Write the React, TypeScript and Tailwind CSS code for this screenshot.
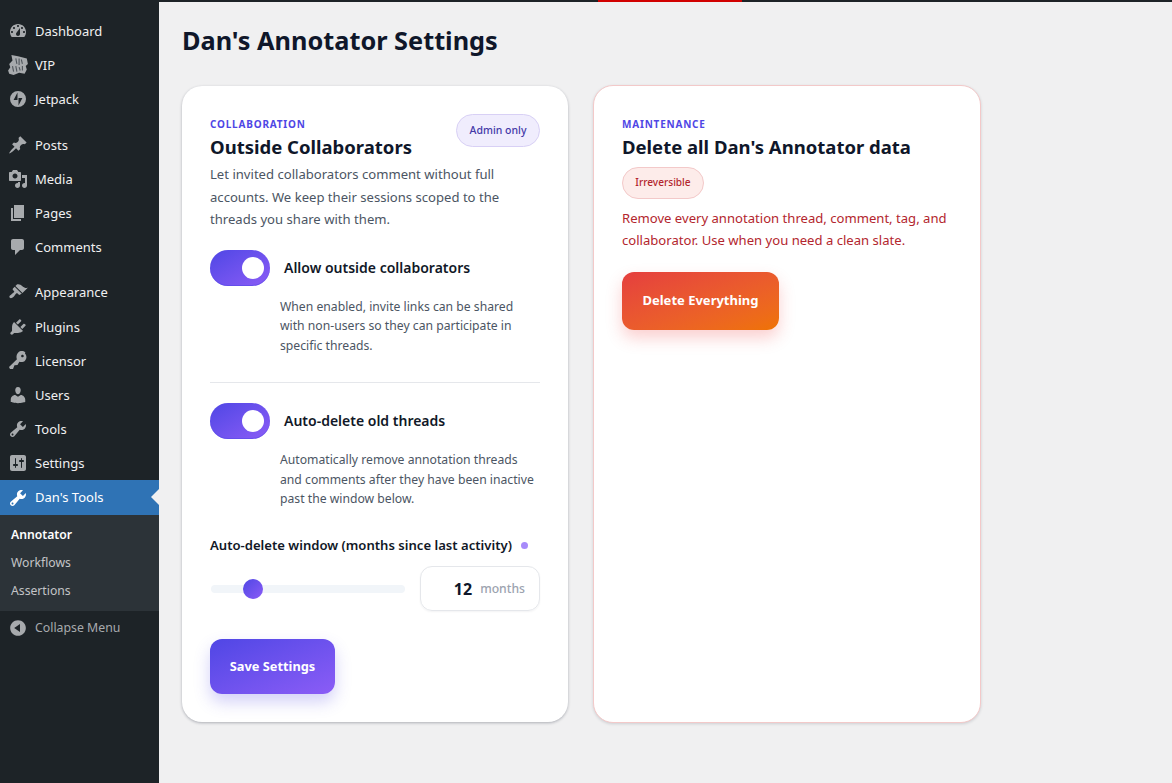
import React from 'react';

const font = { fontFamily: '"Noto Sans", sans-serif' };

const icons: Record<string, string> = {
  dashboard: 'M3.76 16h12.48c1.1-1.37 1.76-3.11 1.76-5 0-4.42-3.58-8-8-8s-8 3.58-8 8c0 1.89.66 3.63 1.76 5zM10 4c.55 0 1 .45 1 1s-.45 1-1 1-1-.45-1-1 .45-1 1-1zM6 6c.55 0 1 .45 1 1s-.45 1-1 1-1-.45-1-1 .45-1 1-1zm8 0c.55 0 1 .45 1 1s-.45 1-1 1-1-.45-1-1 .45-1 1-1zm-5.37 5.55L12 7v6c0 1.1-.9 2-2 2s-2-.9-2-2c0-.57.24-1.08.63-1.45zM4 10c.55 0 1 .45 1 1s-.45 1-1 1-1-.45-1-1 .45-1 1-1zm12 0c.55 0 1 .45 1 1s-.45 1-1 1-1-.45-1-1 .45-1 1-1z',
  jetpack: 'M10 2a8 8 0 1 0 0 16 8 8 0 0 0 0-16zM9.5 11H5.6l3.9-7.6zm1 5.6V9h3.9z',
  posts: 'M10.44 3.02l1.82-1.82 6.36 6.35-1.83 1.82c-1.05-.68-2.48-.57-3.41.36l-.75.75c-.92.93-1.04 2.35-.35 3.41l-1.83 1.82-2.41-2.41-2.8 2.79c-.42.42-3.38 2.71-3.8 2.29s1.86-3.39 2.28-3.81l2.79-2.79L4.1 9.36l1.83-1.82c1.05.69 2.48.57 3.4-.36l.75-.75c.93-.92 1.05-2.35.36-3.41z',
  media: 'M13 11V4c0-.55-.45-1-1-1h-1.67L9 1H5L3.67 3H2c-.55 0-1 .45-1 1v7c0 .55.45 1 1 1h10c.55 0 1-.45 1-1zM7 4.5c1.38 0 2.5 1.12 2.5 2.5S8.38 9.5 7 9.5 4.5 8.38 4.5 7 5.62 4.5 7 4.5zM14 6h5v10.5c0 1.38-1.12 2.5-2.5 2.5S14 17.88 14 16.5s1.12-2.5 2.5-2.5c.17 0 .34.02.5.05V9h-3V6zm-4 8.05V13h2v3.5c0 1.38-1.12 2.5-2.5 2.5S7 17.88 7 16.5 8.12 14 9.5 14c.17 0 .34.02.5.05z',
  pages: 'M6 15V2h10v13H6zm-1 1h8v2H3V5h2v11z',
  comments: 'M5 2h9c1.1 0 2 .9 2 2v7c0 1.1-.9 2-2 2h-2l-5 5v-5H5c-1.1 0-2-.9-2-2V4c0-1.1.9-2 2-2z',
  appearance: 'M14.48 11.06L7.41 3.99l1.5-1.5c.5-.56 2.3-.47 3.51.32 1.21.8 1.43 1.28 2.91 2.1 1.18.64 2.45 1.26 4.45.85zm-.71.71L6.7 4.7 4.93 6.47c-.39.39-.39 1.02 0 1.41l1.06 1.06c.39.39.39 1.03 0 1.42-.6.6-1.43 1.11-2.21 1.69-.35.26-.7.53-1.01.84C1.43 13.23.91 14.85 1.8 15.74c.89.89 2.51.37 3.85-.97.31-.31.58-.67.84-1.02.58-.78 1.09-1.61 1.69-2.21.39-.39 1.02-.39 1.41 0l1.06 1.06c.39.39 1.02.39 1.41 0z',
  plugins: 'M13.11 4.36L9.87 7.6 8 5.73l3.24-3.24c.35-.34 1.05-.2 1.56.32.52.51.66 1.21.31 1.55zm-8 1.77l.91-1.12 9.01 9.01-1.19.84c-.71.71-2.63 1.16-3.82 1.16H6.14L4.9 17.26c-.59.59-1.54.59-2.12 0-.59-.58-.59-1.53 0-2.12l1.24-1.24v-3.88c0-1.13.4-3.19 1.09-3.89zm7.26 3.97l3.24-3.24c.34-.35 1.04-.21 1.55.31.52.51.66 1.21.31 1.55l-3.24 3.25z',
  key: 'M16.95 2.58c1.96 1.95 1.96 5.12 0 7.07-1.51 1.51-3.75 1.84-5.59 1.01l-1.87 3.31-2.99.31L5 18H2l-1-2 7.95-7.69c-.92-2.26-.5-4.92 1.32-6.73 1.95-1.96 5.12-1.96 7.07 0zm-2.51 3.79c.74 0 1.33-.6 1.33-1.34 0-.73-.59-1.33-1.33-1.33-.73 0-1.33.6-1.33 1.33 0 .74.6 1.34 1.33 1.34z',
  users: 'M10 9.25c-2.27 0-2.73-3.44-2.73-3.44C7 4.02 7.82 2 9.97 2c2.16 0 2.98 2.02 2.71 3.81 0 0-.41 3.44-2.68 3.44zm0 2.57L12.72 10c2.39 0 4.52 2.33 4.52 4.53v2.49s-3.65 1.13-7.24 1.13c-3.65 0-7.24-1.13-7.24-1.13v-2.49c0-2.25 1.94-4.48 4.47-4.48z',
  tools: 'M16.68 9.77c-1.34 1.34-3.3 1.67-4.95.99l-5.41 6.52c-.99.99-2.59.99-3.58 0s-.99-2.59 0-3.57l6.52-5.42c-.68-1.65-.35-3.61.99-4.95 1.28-1.28 3.12-1.62 4.72-1.06l-2.89 2.89 2.82 2.82 2.86-2.87c.53 1.58.18 3.39-1.08 4.65zM3.81 16.21c.4.39 1.04.39 1.43 0 .4-.4.4-1.04 0-1.43-.39-.4-1.03-.4-1.43 0-.39.39-.39 1.03 0 1.43z',
  settings: 'M18 16V4c0-1.1-.9-2-2-2H4c-1.1 0-2 .9-2 2v12c0 1.1.9 2 2 2h12c1.1 0 2-.9 2-2zM8 11h1c.55 0 1 .45 1 1s-.45 1-1 1H8v1.5c0 .28-.22.5-.5.5s-.5-.22-.5-.5V13H6c-.55 0-1-.45-1-1s.45-1 1-1h1V5.5c0-.28.22-.5.5-.5s.5.22.5.5V11zm5-2h-1c-.55 0-1-.45-1-1s.45-1 1-1h1V5.5c0-.28.22-.5.5-.5s.5.22.5.5V7h1c.55 0 1 .45 1 1s-.45 1-1 1h-1v5.5c0 .28-.22.5-.5.5s-.5-.22-.5-.5V9z',
  collapse: 'M10 2.16c4.33 0 7.84 3.51 7.84 7.84s-3.51 7.84-7.84 7.84S2.16 14.33 2.16 10 5.71 2.16 10 2.16zm2 11.72V6.12L6.18 9.97z',
};

const Dash = ({ name, className }: { name: string; className: string }) => (
  <svg viewBox="0 0 20 20" className={`w-5 h-5 shrink-0 fill-current ${className}`}>
    <path d={icons[name]} />
  </svg>
);

const VipIcon = () => (
  <svg viewBox="0 0 20 20" className="w-[22px] h-[22px] shrink-0 text-[#a7aaad]">
    <path fill="currentColor" d="M4 1l6 1 8 2 1 5-2 2 1 3-2 4-5-1-5 2-4-1-1-3 2-3-1-3 3-3z" />
    <path fill="none" stroke="#50565c" strokeWidth="1" d="M8 4l1 5M11 4v6M13 5l1 4M5 11l1 5M8 11l1 5M11 12l1 3M14 11v4" />
  </svg>
);

const MenuItem = ({ icon, label }: { icon: string; label: string }) => (
  <div className="flex items-center h-[34px] text-[13px] text-[#f0f0f1] whitespace-nowrap">
    <div className="w-[35px] flex justify-center">
      {icon === 'vip' ? <VipIcon /> : <Dash name={icon} className="text-[#a7aaad]" />}
    </div>
    <span className="pt-[1px]">{label}</span>
  </div>
);

const Sidebar = () => (
  <div className="w-[159px] shrink-0 bg-[#1d2327] flex flex-col pt-[14px]">
    <MenuItem icon="dashboard" label="Dashboard" />
    <MenuItem icon="vip" label="VIP" />
    <MenuItem icon="jetpack" label="Jetpack" />
    <div className="h-[12px]" />
    <MenuItem icon="posts" label="Posts" />
    <MenuItem icon="media" label="Media" />
    <MenuItem icon="pages" label="Pages" />
    <MenuItem icon="comments" label="Comments" />
    <div className="h-[11px]" />
    <MenuItem icon="appearance" label="Appearance" />
    <div className="h-[1px]" />
    <MenuItem icon="plugins" label="Plugins" />
    <MenuItem icon="key" label="Licensor" />
    <MenuItem icon="users" label="Users" />
    <MenuItem icon="tools" label="Tools" />
    <MenuItem icon="settings" label="Settings" />
    <div className="relative flex items-center h-[35px] bg-[#2f73b5] text-[13px] text-white">
      <div className="w-[35px] flex justify-center">
        <Dash name="tools" className="text-white" />
      </div>
      <span>Dan's Tools</span>
      <div className="absolute right-0 top-[9px] border-y-[8px] border-r-[8px] border-y-transparent border-r-[#f0f0f1]" />
    </div>
    <div className="bg-[#2c3338] py-[6px] text-[12.2px] text-[#c3c4c7]">
      <div className="h-[28px] flex items-center pl-[11px] font-semibold text-white">Annotator</div>
      <div className="h-[28px] flex items-center pl-[11px] pt-[1px]">Workflows</div>
      <div className="h-[28px] flex items-center pl-[11px] pt-[1px]">Assertions</div>
    </div>
    <div className="flex items-center h-[34px] text-[12.3px] text-[#a7aaad]">
      <div className="w-[35px] flex justify-center">
        <Dash name="collapse" className="text-[#a7aaad]" />
      </div>
      <span className="pt-[1px]">Collapse Menu</span>
    </div>
  </div>
);

const Toggle = () => (
  <div className="w-[60px] h-[36px] shrink-0 rounded-full bg-gradient-to-br from-[#4f46e5] to-[#8b5cf6] flex items-center justify-end pr-[6px] shadow-[inset_0_-1px_0_rgba(79,70,229,0.5)]">
    <div className="w-[22px] h-[22px] rounded-full bg-white" />
  </div>
);

const Setting = ({ title, lines }: { title: string; lines: string[] }) => (
  <div>
    <div className="flex items-center gap-[14px]">
      <Toggle />
      <span className="text-[14px] leading-[20px] font-semibold text-[#111827] whitespace-nowrap">{title}</span>
    </div>
    <p className="mt-[11px] ml-[70px] text-[12.2px] leading-[19.6px] text-[#4b5563] whitespace-nowrap">
      {lines.map((l) => (
        <span key={l} className="block">{l}</span>
      ))}
    </p>
  </div>
);

export default function App() {
  return (
    <div className="relative flex w-[1172px] h-[783px] overflow-hidden bg-[#f0f0f1]" style={font}>
      <div className="absolute top-0 left-0 right-0 h-[2px] bg-[#1d2327]">
        <div className="absolute left-[598px] w-[144px] h-[2px] bg-[#d10000]" />
      </div>
      <Sidebar />
      <div className="flex-1 pl-[23px] pt-[24px]">
        <h1 className="text-[25.3px] leading-[32px] font-bold text-[#0f172a] whitespace-nowrap">Dan's Annotator Settings</h1>
        <div className="mt-[29px] flex items-start gap-[25px]">
          <div className="mt-[1px] w-[386px] h-[636px] rounded-[20px] bg-white px-[28px] pt-[28px] shadow-[0_1px_3px_rgba(15,23,42,0.3)]">
            <div className="flex justify-between">
              <div>
                <div className="text-[10px] leading-[20px] font-bold tracking-[0.08em] text-[#4f46e5]">COLLABORATION</div>
                <div className="text-[18.5px] leading-[26px] font-bold text-[#0f172a] whitespace-nowrap">Outside Collaborators</div>
              </div>
              <div className="h-[33px] w-[84px] rounded-full bg-[#f0edfd] border border-[#d8d0f5] flex items-center justify-center text-[10.5px] font-medium text-[#4338a8]">Admin only</div>
            </div>
            <p className="mt-[3px] text-[13.1px] leading-[22.5px] text-[#4b5563] whitespace-nowrap">
              Let invited collaborators comment without full<br />accounts. We keep their sessions scoped to the<br />threads you share with them.
            </p>
            <div className="mt-[19px]">
              <Setting title="Allow outside collaborators" lines={['When enabled, invite links can be shared', 'with non-users so they can participate in', 'specific threads.']} />
            </div>
            <div className="mt-[27px] mb-[20px] h-[1px] bg-[#e5e7eb]" />
            <Setting title="Auto-delete old threads" lines={['Automatically remove annotation threads', 'and comments after they have been inactive', 'past the window below.']} />
            <div className="mt-[26px] flex items-center gap-[9px] text-[13.1px] leading-[20px] font-semibold text-[#111827] whitespace-nowrap">
              <span>Auto-delete window (months since last activity)</span>
              <span className="w-[7px] h-[7px] rounded-full bg-[#a78bfa]" />
            </div>
            <div className="mt-[11px] flex items-center gap-[15px]">
              <div className="relative ml-[1px] w-[194px] h-[8px] rounded-full bg-[#f1f5f9]">
                <div className="absolute left-[32px] top-[-6px] w-[20px] h-[20px] rounded-full bg-gradient-to-br from-[#4f46e5] to-[#8b5cf6]" />
              </div>
              <div className="w-[120px] h-[45px] rounded-[12px] border border-[#e5e7eb] shadow-[0_1px_2px_rgba(15,23,42,0.05)] flex items-center justify-end pr-[14px] gap-[8px]">
                <span className="text-[16px] font-bold text-[#0f172a]">12</span>
                <span className="pt-[1px] text-[12.2px] font-medium text-[#9ca3af]">months</span>
              </div>
            </div>
            <div className="mt-[28px] w-[125px] h-[55px] rounded-[12px] bg-gradient-to-br from-[#4f46e5] to-[#8b5cf6] flex items-center justify-center text-[12.8px] font-bold text-white shadow-[0_8px_16px_rgba(79,70,229,0.25)]">Save Settings</div>
          </div>
          <div className="w-[388px] h-[638px] rounded-[20px] bg-white border border-[#f3c9c9] px-[28px] pt-[28px] shadow-[0_1px_3px_rgba(15,23,42,0.15)]">
            <div className="text-[10px] leading-[20px] font-bold tracking-[0.08em] text-[#4f46e5]">MAINTENANCE</div>
            <div className="text-[18.5px] leading-[26px] font-bold text-[#0f172a] whitespace-nowrap">Delete all Dan's Annotator data</div>
            <div className="mt-[7px] w-[82px] h-[32px] rounded-full bg-[#fdecea] border border-[#f3c9c9] flex items-center justify-center text-[10.1px] font-medium text-[#b3262e]">Irreversible</div>
            <p className="mt-[8px] text-[13.1px] leading-[22px] text-[#b3262e] whitespace-nowrap">
              Remove every annotation thread, comment, tag, and<br />collaborator. Use when you need a clean slate.
            </p>
            <div className="mt-[21px] w-[157px] h-[58px] rounded-[12px] bg-gradient-to-br from-[#e53e3e] to-[#ef7300] flex items-center justify-center text-[13px] font-bold text-white shadow-[0_8px_16px_rgba(239,68,68,0.25)]">Delete Everything</div>
          </div>
        </div>
      </div>
    </div>
  );
}
